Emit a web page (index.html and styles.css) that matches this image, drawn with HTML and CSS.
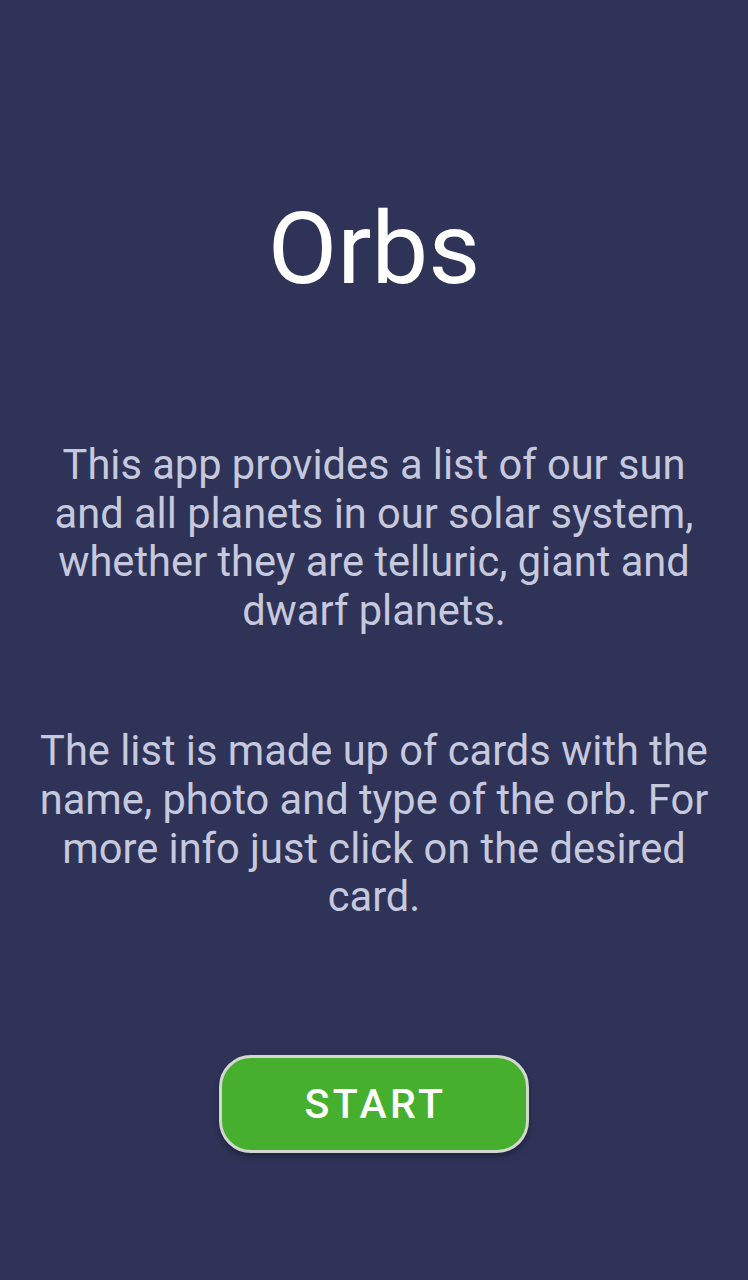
FILE: index.html
```html
<!DOCTYPE html>
<html>
<head>
<meta charset="utf-8">
<link rel="stylesheet" href="styles.css">
</head>
<body>
<main class="screen">
  <h1 class="title">Orbs</h1>
  <p class="desc desc-first">This app provides a list of our sun and all planets in our solar system, whether they are telluric, giant and dwarf planets.</p>
  <p class="desc desc-second">The list is made up of cards with the name, photo and type of the orb. For more info just click on the desired card.</p>
  <button class="start">START</button>
</main>
</body>
</html>
```

FILE: styles.css
```css
html, body {
  margin: 0;
  padding: 0;
  background: #2f3358;
}
.screen {
  width: 748px;
  height: 1280px;
  box-sizing: border-box;
  padding: 189px 36px 0;
  display: flex;
  flex-direction: column;
  align-items: center;
  font-family: Roboto, "Liberation Sans", sans-serif;
}
.title {
  margin: 0;
  font-size: 101px;
  font-weight: 400;
  line-height: normal;
  color: #ffffff;
}
.desc {
  margin: 0;
  font-size: 41.6px;
  line-height: 48.6px;
  color: #c6c9dd;
  text-align: center;
}
.desc-first {
  margin-top: 133px;
}
.desc-second {
  margin-top: 92px;
}
.start {
  margin-top: 133px;
  width: 310px;
  height: 98px;
  box-sizing: border-box;
  border: 3px solid #d3d7cf;
  border-radius: 32px;
  background: #46b02e;
  color: #ffffff;
  font-family: Roboto, "Liberation Sans", sans-serif;
  font-weight: 500;
  font-size: 41px;
  letter-spacing: 3.5px;
  box-shadow: 0 4px 6px rgba(0, 0, 0, 0.3);
  padding: 0 0 0 3px;
}
```
